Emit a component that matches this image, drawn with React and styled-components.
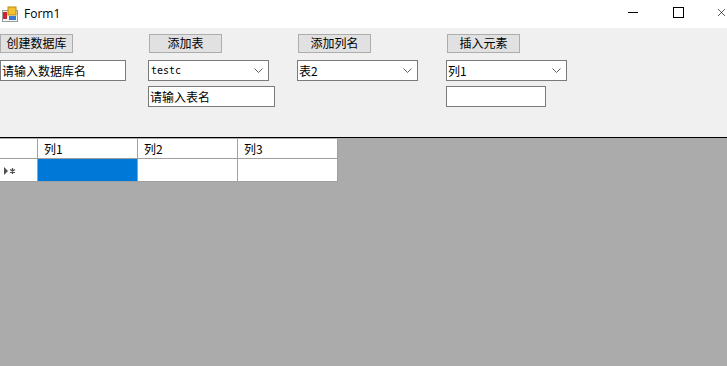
import React from 'react'
import styled, { createGlobalStyle } from 'styled-components'
import { X } from 'lucide-react'

const GlobalStyle = createGlobalStyle`
  html, body {
    margin: 0;
    padding: 0;
    background: #ffffff;
  }
  * {
    box-sizing: border-box;
  }
`

const cjk = `"Noto Sans CJK SC", "Liberation Sans", sans-serif`

const Window = styled.div`
  width: 727px;
  height: 366px;
  display: flex;
  flex-direction: column;
  overflow: hidden;
  font-family: ${cjk};
  font-size: 12px;
  color: #000;
`

const TitleBar = styled.div`
  height: 28px;
  flex: none;
  display: grid;
  grid-template-columns: 16px auto 1fr 45px 45px 26px;
  align-items: center;
  background: #ffffff;
  padding-left: 2px;
`

const TitleText = styled.span`
  margin-left: 6px;
  font-family: "Open Sans", "Noto Sans", sans-serif;
  font-size: 12px;
  margin-top: -2px;
`

const CaptionButton = styled.div`
  height: 100%;
  display: flex;
  align-items: center;
  justify-content: ${p => (p.$close ? 'flex-start' : 'center')};
  padding-bottom: 3px;
  padding-left: ${p => (p.$close ? '14px' : '0')};
  color: #000;
`

const Panel = styled.div`
  height: 110px;
  flex: none;
  background: #f0f0f0;
  display: grid;
  grid-template-columns: 148px 149px 149px 1fr;
  padding-top: 6px;
  border-bottom: 1px solid #000;
`

const Column = styled.div`
  display: flex;
  flex-direction: column;
  align-items: flex-start;
`

const Button = styled.div`
  width: 73px;
  height: 19px;
  margin-left: ${p => (p.$shift ? '1px' : '0')};
  background: #e1e1e1;
  border: 1px solid #adadad;
  display: flex;
  align-items: center;
  justify-content: center;
  font-size: 12px;
  line-height: 1;
  padding-bottom: 1px;
`

const TextBox = styled.div`
  width: ${p => p.$w}px;
  height: 21px;
  margin-top: ${p => p.$top}px;
  background: #fff;
  border: 1px solid #7a7a7a;
  display: flex;
  align-items: center;
  padding-left: 1px;
  font-size: 12px;
  line-height: 1;
`

const Combo = styled.div`
  width: ${p => p.$w}px;
  height: 21px;
  margin-top: 7px;
  background: #fff;
  border: 1px solid #7a7a7a;
  display: flex;
  align-items: center;
  padding-left: 1px;
  padding-right: 5px;
  font-size: 12px;
  line-height: 1;
`

const ComboText = styled.span`
  flex: 1;
  font-family: ${p => (p.$mono ? '"DejaVu Sans Mono", "Liberation Mono", monospace' : cjk)};
  font-size: ${p => (p.$mono ? '10px' : '12px')};
  padding-left: ${p => (p.$mono ? '1px' : '0')};
`

const Workspace = styled.div`
  flex: 1;
  background: #ababab;
  padding-top: 1px;
`

const Grid = styled.div`
  display: grid;
  grid-template-columns: 38px 100px 100px 100px;
  grid-template-rows: 20px 23px;
  width: 338px;
  background: #fff;
`

const Cell = styled.div`
  border-right: 1px solid #a0a0a0;
  border-bottom: 1px solid #a0a0a0;
  background: ${p => (p.$selected ? '#0078d7' : '#fff')};
  display: flex;
  align-items: center;
  padding-left: 6px;
  font-size: 12px;
  line-height: 1;
`

const RowHeader = styled(Cell)`
  padding-left: 4px;
  padding-top: 2px;
`

const ArrowDown = () => (
  <svg width="9" height="5" viewBox="0 0 9 5">
    <path d="M0.5 0.5 L4.5 4.5 L8.5 0.5" fill="none" stroke="#606060" strokeWidth="1" />
  </svg>
)

const FormIcon = () => (
  <svg width="16" height="16" viewBox="0 0 16 16">
    <rect x="0.5" y="4.5" width="15" height="11" fill="#f4f4f4" stroke="#9a9a9a" />
    <rect x="1" y="6" width="4" height="7" fill="#c8262a" />
    <rect x="6" y="1" width="8" height="8" fill="#f2c230" stroke="#b88a10" />
    <rect x="7" y="10" width="7" height="4" fill="#3a78d0" />
  </svg>
)

const RowMarker = () => (
  <svg width="12" height="8" viewBox="0 0 12 8">
    <path d="M0 0 L4 4 L0 8 Z" fill="#505050" />
    <path d="M8.5 1 V7 M6 2.5 L11 5.5 M6 5.5 L11 2.5" stroke="#505050" strokeWidth="1.3" />
  </svg>
)

export default function App() {
  return (
    <>
      <GlobalStyle />
      <Window>
        <TitleBar>
          <FormIcon />
          <TitleText>Form1</TitleText>
          <span />
          <CaptionButton>
            <svg width="11" height="11" viewBox="0 0 11 11">
              <path d="M0 5.5 H10" stroke="#000" strokeWidth="1" />
            </svg>
          </CaptionButton>
          <CaptionButton>
            <svg width="11" height="11" viewBox="0 0 11 11">
              <rect x="0.5" y="0.5" width="10" height="10" fill="none" stroke="#000" />
            </svg>
          </CaptionButton>
          <CaptionButton $close>
            <X size={13} strokeWidth={1.2} color="#000" style={{ flex: 'none' }} />
          </CaptionButton>
        </TitleBar>
        <Panel>
          <Column>
            <Button>创建数据库</Button>
            <TextBox $w={126} $top={7}>请输入数据库名</TextBox>
          </Column>
          <Column>
            <Button $shift>添加表</Button>
            <Combo $w={121}>
              <ComboText $mono>testc</ComboText>
              <ArrowDown />
            </Combo>
            <TextBox $w={127} $top={5}>请输入表名</TextBox>
          </Column>
          <Column>
            <Button $shift>添加列名</Button>
            <Combo $w={121}>
              <ComboText>表2</ComboText>
              <ArrowDown />
            </Combo>
          </Column>
          <Column>
            <Button $shift>插入元素</Button>
            <Combo $w={121}>
              <ComboText>列1</ComboText>
              <ArrowDown />
            </Combo>
            <TextBox $w={100} $top={5} />
          </Column>
        </Panel>
        <Workspace>
          <Grid>
            <Cell />
            <Cell>列1</Cell>
            <Cell>列2</Cell>
            <Cell>列3</Cell>
            <RowHeader>
              <RowMarker />
            </RowHeader>
            <Cell $selected />
            <Cell />
            <Cell />
          </Grid>
        </Workspace>
      </Window>
    </>
  )
}
